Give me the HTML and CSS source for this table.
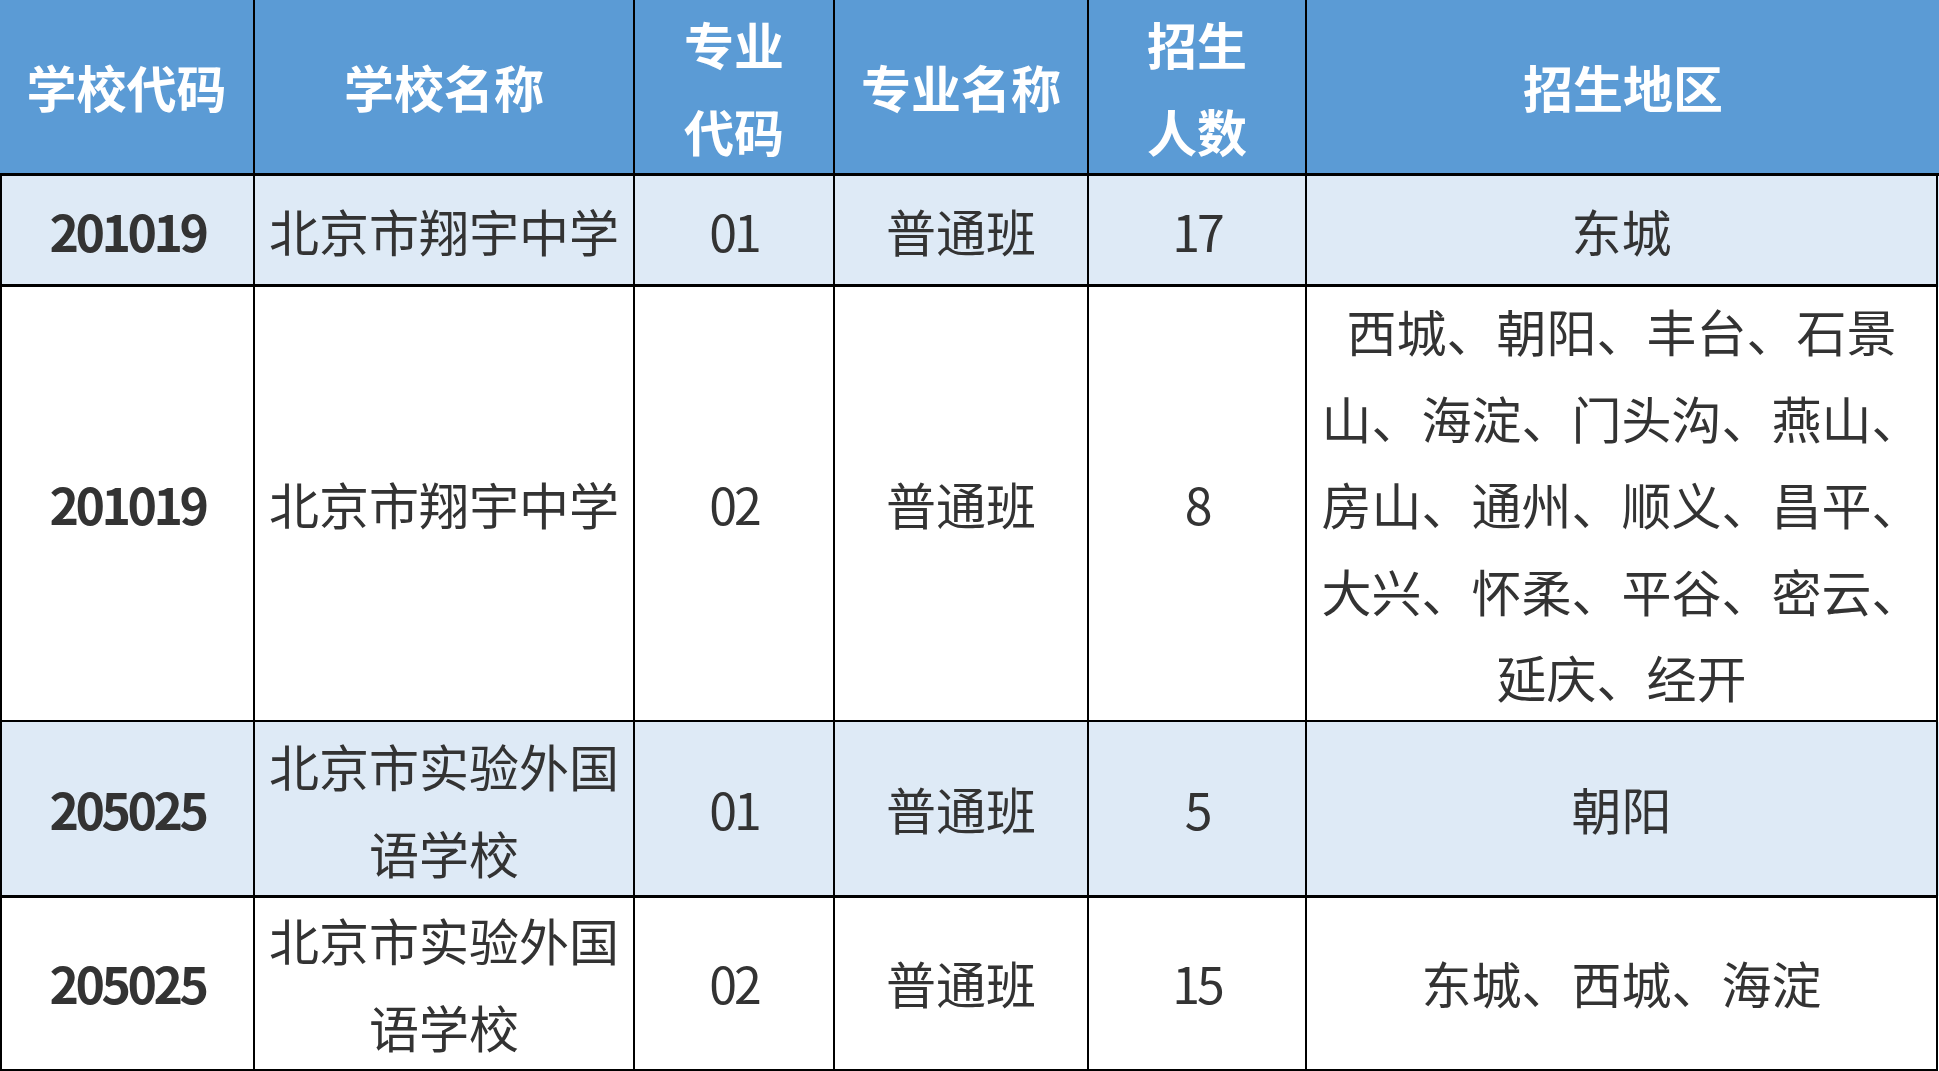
FILE: index.html
```html
<!DOCTYPE html>
<html lang="zh-CN">
<head>
<meta charset="utf-8">
<title>招生计划</title>
<link rel="stylesheet" href="styles.css">
</head>
<body>
<div class="sheet">
  <div class="row head">
    <div class="cell">学校代码</div>
    <div class="cell">学校名称</div>
    <div class="cell">专业<br>代码</div>
    <div class="cell">专业名称</div>
    <div class="cell">招生<br>人数</div>
    <div class="cell last">招生地区</div>
  </div>
  <div class="row shade r1">
    <div class="cell first code">201019</div>
    <div class="cell">北京市翔宇中学</div>
    <div class="cell num">01</div>
    <div class="cell">普通班</div>
    <div class="cell num">17</div>
    <div class="cell">东城</div>
  </div>
  <div class="row r2">
    <div class="cell first code">201019</div>
    <div class="cell">北京市翔宇中学</div>
    <div class="cell num">02</div>
    <div class="cell">普通班</div>
    <div class="cell num">8</div>
    <div class="cell">西城、朝阳、丰台、石景<br>山、海淀、门头沟、燕山、<br>房山、通州、顺义、昌平、<br>大兴、怀柔、平谷、密云、<br>延庆、经开</div>
  </div>
  <div class="row shade r3">
    <div class="cell first code">205025</div>
    <div class="cell">北京市实验外国<br>语学校</div>
    <div class="cell num">01</div>
    <div class="cell">普通班</div>
    <div class="cell num">5</div>
    <div class="cell">朝阳</div>
  </div>
  <div class="row r4">
    <div class="cell first code">205025</div>
    <div class="cell">北京市实验外国<br>语学校</div>
    <div class="cell num">02</div>
    <div class="cell">普通班</div>
    <div class="cell num">15</div>
    <div class="cell">东城、西城、海淀</div>
  </div>
</div>
</body>
</html>
```

FILE: styles.css
```css
html, body {
  margin: 0;
  padding: 0;
  background: #ffffff;
}

body {
  font-family: "Noto Sans CJK SC", "Noto Sans", sans-serif;
  color: #333333;
}

.sheet {
  width: 1939px;
  display: flex;
  flex-direction: column;
}

.row {
  display: grid;
  grid-template-columns: 255px 380px 200px 254px 218px 632px;
}

.head { height: 176px; background: #5b9bd5; color: #ffffff; font-weight: 700; }
.r1 { height: 111px; }
.r2 { height: 435px; }
.r3 { height: 174px; }
.r4 { height: 175px; }

.shade { background: #deeaf6; }

.cell {
  box-sizing: border-box;
  display: flex;
  align-items: center;
  justify-content: center;
  text-align: center;
  font-size: 50px;
  line-height: 86.6px;
  border-right: 2px solid #000000;
  border-bottom: 3px solid #000000;
  white-space: nowrap;
}

.head .last {
  border-right: none;
}

.row:not(.head) .cell:last-child {
  margin-right: 1px;
}

.first {
  border-left: 2px solid #000000;
}

.code {
  font-weight: 700;
  letter-spacing: -3.5px;
}

.num {
  letter-spacing: -3px;
}
```
